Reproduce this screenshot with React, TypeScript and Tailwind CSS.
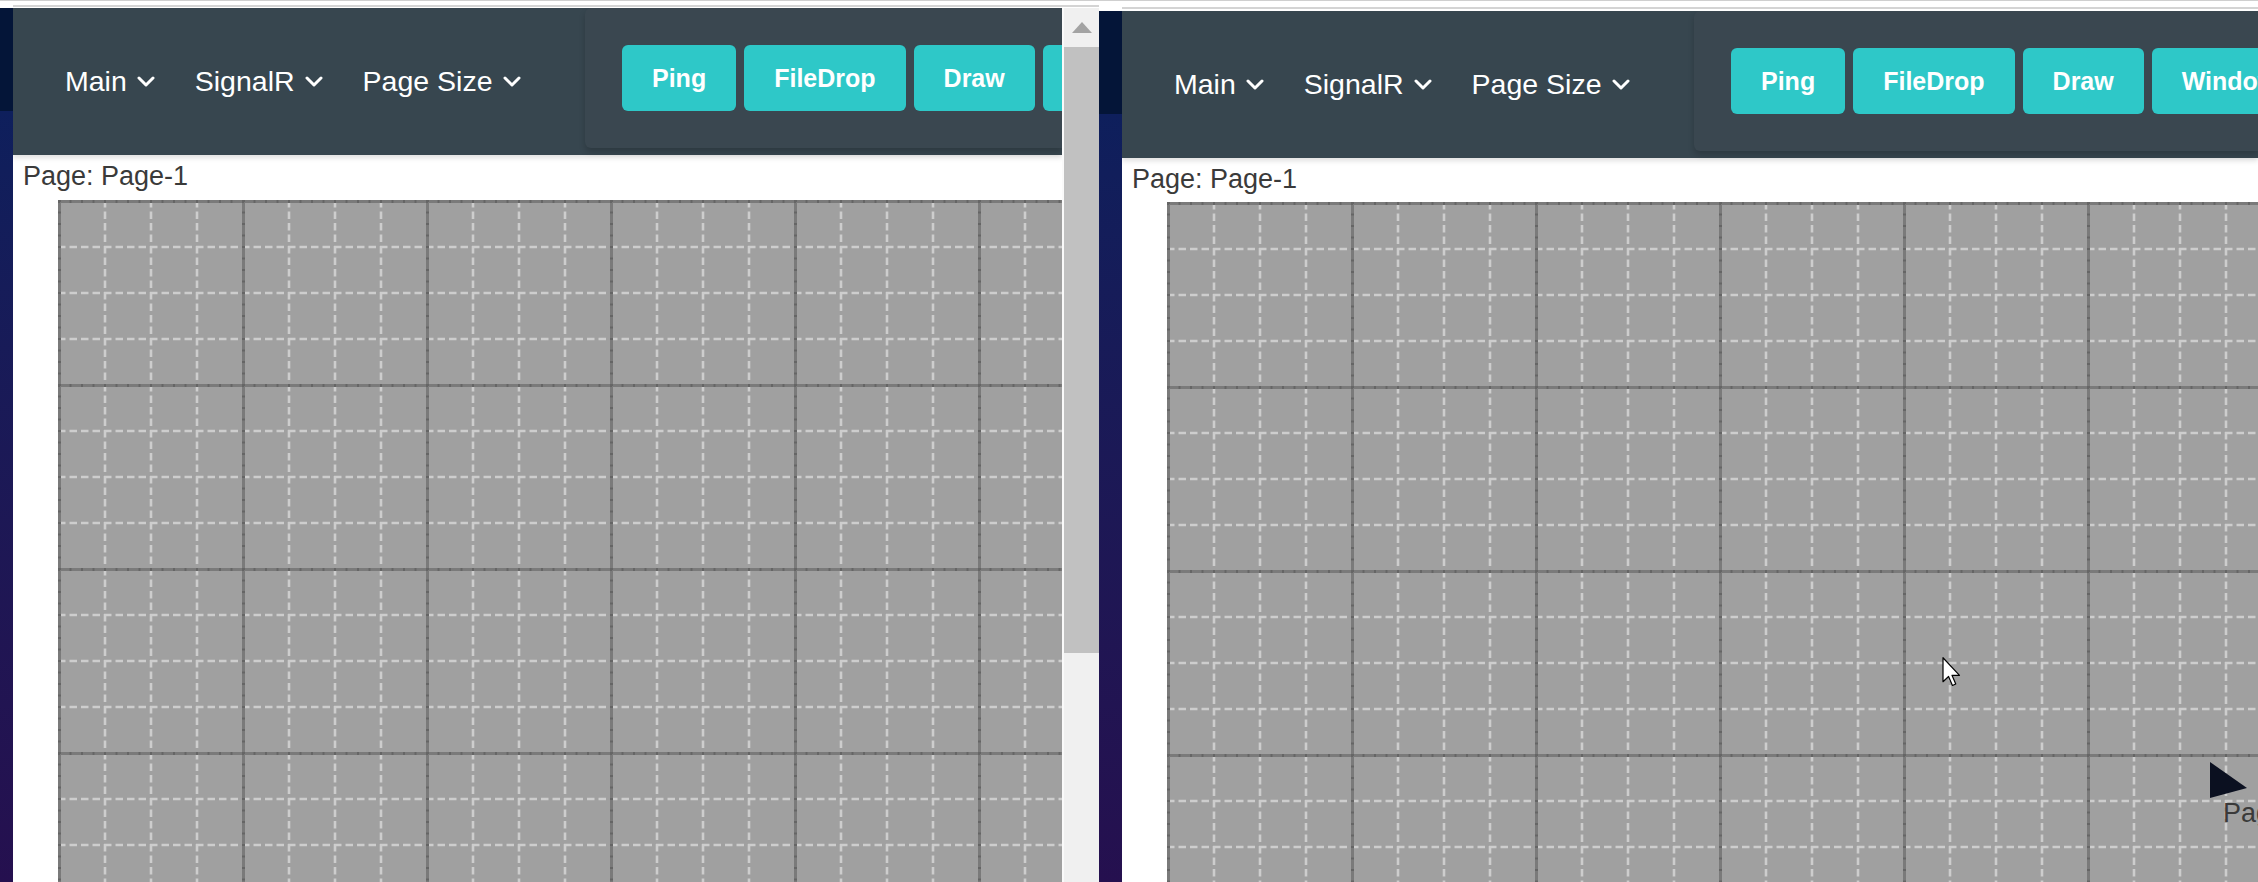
import React from "react";

const MENU = ["Main", "SignalR", "Page Size"];
const BUTTONS = ["Ping", "FileDrop", "Draw", "Window"];

const Chevron = () => (
  <svg width="18" height="12" viewBox="0 0 18 12" className="shrink-0">
    <polyline
      points="2,2 9,9 16,2"
      fill="none"
      stroke="white"
      strokeWidth="3"
      strokeLinecap="round"
      strokeLinejoin="round"
    />
  </svg>
);

const DesktopStrip = ({ width, top }: { width: string; top: string }) => (
  <div className={`flex flex-col shrink-0 ${width}`}>
    <div className={`${top} bg-white border-t border-[#cfcfcf]`} />
    <div className="h-[103px] bg-[#041538]" />
    <div className="flex-1 bg-linear-to-b from-[#0e1f5c] to-[#25104f]" />
  </div>
);

const GridCanvas = ({ id }: { id: string }) => (
  <svg className="w-full h-full block">
    <defs>
      <pattern id={id} width="184" height="184" patternUnits="userSpaceOnUse">
        <rect width="184" height="184" fill="#a0a0a0" />
        {[47, 93, 139].map((p) => (
          <g key={p}>
            <line x1={p} y1="0" x2={p} y2="184" stroke="#cdcdcd" strokeWidth="2.6" strokeDasharray="7.5 4" />
            <line x1="0" y1={p} x2="184" y2={p} stroke="#cdcdcd" strokeWidth="2.6" strokeDasharray="7.5 4" />
          </g>
        ))}
        <line x1="1.5" y1="0" x2="1.5" y2="184" stroke="#7a7a7a" strokeWidth="3" />
        <line x1="0" y1="1.5" x2="184" y2="1.5" stroke="#7a7a7a" strokeWidth="3" />
        <line x1="1.5" y1="0" x2="1.5" y2="184" stroke="#656565" strokeWidth="3" strokeDasharray="2 9.5" />
        <line x1="0" y1="1.5" x2="184" y2="1.5" stroke="#656565" strokeWidth="3" strokeDasharray="2 9.5" />
      </pattern>
    </defs>
    <rect width="100%" height="100%" fill={`url(#${id})`} />
  </svg>
);

const Header = () => (
  <div className="h-[147px] shrink-0 flex bg-[#37464f] shadow-[0_3px_5px_rgba(0,0,0,0.12)] relative z-10">
    {/* menu part */}
    <div className="w-[572px] shrink-0 flex items-center gap-[40px] pl-[52px] text-white text-[28.5px] leading-none font-['Liberation_Sans',Arial,sans-serif]">
      {MENU.map((m) => (
        <div key={m} className="flex items-center gap-[10px] whitespace-nowrap">
          <span>{m}</span>
          <Chevron />
        </div>
      ))}
    </div>
    {/* buttons panel */}
    <div className="flex-1 min-w-0 h-[140px] overflow-hidden rounded-l-[6px] bg-[#3a4750] shadow-[0_4px_6px_rgba(0,0,0,0.18)] flex items-center gap-[8px] pl-[37px]">
      {BUTTONS.map((b) => (
        <button
          key={b}
          className="shrink-0 h-[66px] px-[30px] rounded-[6px] bg-[#2ec8c8] text-white font-bold text-[25px] leading-none whitespace-nowrap font-['Liberation_Sans',Arial,sans-serif]"
        >
          {b}
        </button>
      ))}
    </div>
  </div>
);

const PageLabel = ({ h }: { h: string }) => (
  <div className={`${h} shrink-0 pl-[10px] pt-[8px] text-[27px] leading-[27px] text-[#3a3a3a] font-['Liberation_Sans',Arial,sans-serif]`}>
    Page: Page-1
  </div>
);

export default function App() {
  return (
    <div className="w-[2258px] h-[882px] flex overflow-hidden bg-white">
      <DesktopStrip width="w-[13px]" top="h-[8px]" />

      {/* left window */}
      <div className="w-[1086px] shrink-0 flex flex-col">
        <div className="h-[8px] shrink-0 bg-white border-t border-[#cfcfcf] flex flex-col">
          <div className="mt-[4px] h-[2px] bg-[#d4d4d4]" />
        </div>
        <div className="flex-1 flex min-h-0">
          <div className="flex-1 min-w-0 flex flex-col overflow-hidden bg-white">
            <Header />
            <PageLabel h="h-[45px]" />
            <div className="flex-1 ml-[45px] overflow-hidden">
              <GridCanvas id="gridL" />
            </div>
          </div>
          {/* scrollbar */}
          <div className="w-[37px] shrink-0 bg-[#f0f0f0] border-l-2 border-[#fafafa] flex flex-col">
            <div className="h-[39px] flex items-center justify-center">
              <svg width="20" height="11" viewBox="0 0 20 11">
                <polygon points="10,0 20,11 0,11" fill="#a3a3a3" />
              </svg>
            </div>
            <div className="h-[606px] bg-[#c1c1c1]" />
          </div>
        </div>
      </div>

      <DesktopStrip width="w-[23px]" top="h-[11px]" />

      {/* right window */}
      <div className="flex-1 flex flex-col min-w-0">
        <div className="h-[11px] shrink-0 bg-white border-t border-[#cfcfcf] flex flex-col">
          <div className="mt-[6px] h-[2px] bg-[#d4d4d4]" />
        </div>
        <div className="flex-1 flex flex-col overflow-hidden bg-white">
          <Header />
          <PageLabel h="h-[44px]" />
          <div className="flex-1 ml-[45px] overflow-hidden relative">
            <GridCanvas id="gridR" />
            {/* page node */}
            <div className="absolute left-[1043px] top-[560px]">
              <svg width="38" height="37" viewBox="0 0 38 37">
                <polygon points="0,0 37,26 0,36" fill="#0b1020" />
              </svg>
              <div className="ml-[13px] mt-[1px] text-[27px] leading-[27px] text-[#3a3a3a] whitespace-nowrap font-['Liberation_Sans',Arial,sans-serif]">
                Page-1
              </div>
            </div>
            {/* mouse cursor */}
            <svg className="absolute left-[775px] top-[455px]" width="20" height="30" viewBox="0 0 13 20">
              <path d="M0.5 0.5 L0.5 16.5 L4.2 13 L6.8 19 L9 18 L6.5 12.2 L11.5 12.2 Z" fill="white" stroke="black" strokeWidth="0.8" strokeLinejoin="round" />
            </svg>
          </div>
        </div>
      </div>
    </div>
  );
}
